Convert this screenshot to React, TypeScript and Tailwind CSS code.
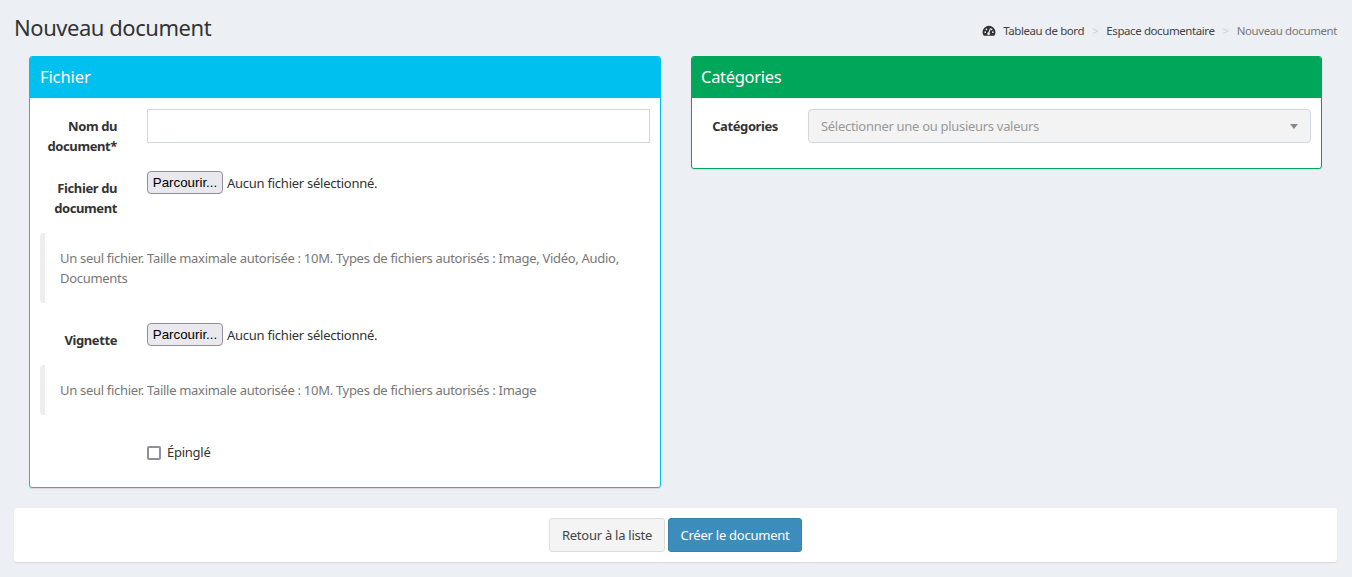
import React from "react";

const font = { fontFamily: '"Noto Sans", "Open Sans", sans-serif' };

function FileField() {
  return (
    <div className="flex h-[23px] items-center">
      <button
        type="button"
        className="h-[23px] w-[76px] rounded-[4px] border border-[#8f8f9d] bg-[#e9e9ed] text-center text-[13.33px] leading-none text-black [font-family:'Liberation_Sans',sans-serif]"
      >
        Parcourir...
      </button>
      <span className="ml-[4px] pt-[3px] text-[13px] tracking-[-0.25px] text-[#333]">Aucun fichier sélectionné.</span>
    </div>
  );
}

function Label({ children, className = "" }: { children: React.ReactNode; className?: string }) {
  return (
    <label className={`w-[77px] shrink-0 text-right text-[13px] font-bold leading-[20px] tracking-[-0.4px] text-[#333] ${className}`}>
      {children}
    </label>
  );
}

function Callout({ children, className = "" }: { children: React.ReactNode; className?: string }) {
  return (
    <div className={`rounded-[3px] border-l-[5px] border-[#eeeeee] py-[15px] pl-[15px] pr-[20px] text-[13px] leading-[20px] tracking-[-0.3px] text-[#777] ${className}`}>
      {children}
    </div>
  );
}

export default function App() {
  return (
    <div style={font} className="min-h-[577px] bg-[#ecf0f5] pl-[14px] pr-[15px] pt-[13px] text-[#333]">
      <header className="flex h-[28px] items-center justify-between">
        <h1 className="text-[22px] leading-[28px] tracking-[-0.45px] text-[#333]">Nouveau document</h1>
        <nav className="flex items-center pt-[8px] text-[11.5px] tracking-[-0.41px]">
          <svg viewBox="0 0 16 14" className="mr-[7px] h-[12px] w-[14px] fill-[#333]">
            <path d="M8 1a7.5 7.5 0 0 0-6.6 11.1c.2.3.5.5.9.5h11.4c.4 0 .7-.2.9-.5A7.5 7.5 0 0 0 8 1Z" />
            <circle cx="3.6" cy="8.4" r="1" fill="#ecf0f5" />
            <circle cx="5" cy="5" r="1" fill="#ecf0f5" />
            <circle cx="11" cy="5" r="1" fill="#ecf0f5" />
            <circle cx="12.4" cy="8.4" r="1" fill="#ecf0f5" />
            <path d="M9.2 3.6 7.4 8.5a1.6 1.6 0 1 0 1.3.5l1.5-5Z" fill="#ecf0f5" />
          </svg>
          <span className="text-[#444]">Tableau de bord</span>
          <span className="mx-[8px] text-[#ccc]">&gt;</span>
          <span className="text-[#444]">Espace documentaire</span>
          <span className="mx-[8px] text-[#ccc]">&gt;</span>
          <span className="text-[#777]">Nouveau document</span>
        </nav>
      </header>

      <div className="mt-[15px] flex items-start gap-[30px] px-[15px]">
        <section className="h-[432px] w-[632px] overflow-hidden rounded-[3px] border border-[#00c0ef] bg-white shadow-[0_1px_1px_rgba(0,0,0,0.1)]">
          <div className="-mx-px -mt-px flex h-[42px] items-center bg-[#00c0ef] px-[11px] text-[16.5px] tracking-[-0.1px] text-white">
            Fichier
          </div>
          <div className="px-[10px] pt-[11px]">
            <div className="flex gap-[30px]">
              <Label className="pt-[7px]">Nom du document*</Label>
              <input type="text" className="h-[34px] w-[503px] border border-[#d2d6de] bg-white outline-none" />
            </div>
            <div className="mt-[15px] flex gap-[30px]">
              <Label className="pt-[7px]">Fichier du document</Label>
              <FileField />
            </div>
            <Callout className="mt-[15px] h-[70px]">
              Un seul fichier. Taille maximale autorisée : 10M. Types de fichiers autorisés : Image, Vidéo, Audio, Documents
            </Callout>
            <div className="mt-[20px] flex gap-[30px]">
              <Label className="pt-[7px]">Vignette</Label>
              <FileField />
            </div>
            <Callout className="mt-[15px] h-[50px]">
              Un seul fichier. Taille maximale autorisée : 10M. Types de fichiers autorisés : Image
            </Callout>
            <div className="ml-[107px] mt-[28px] flex items-center gap-[6px]">
              <span className="h-[14px] w-[14px] rounded-[2px] border-2 border-[#8f8f9d] bg-white" />
              <span className="text-[13px] tracking-[-0.25px] text-[#333]">Épinglé</span>
            </div>
          </div>
        </section>

        <section className="h-[113px] w-[631px] overflow-hidden rounded-[3px] border border-[#00a65a] bg-white shadow-[0_1px_1px_rgba(0,0,0,0.1)]">
          <div className="-mx-px -mt-px flex h-[42px] items-center bg-[#00a65a] px-[10px] text-[16.5px] tracking-[-0.3px] text-white">
            Catégories
          </div>
          <div className="flex items-center gap-[30px] px-[10px] pt-[11px]">
            <Label className="-ml-px">Catégories</Label>
            <div className="relative flex h-[34px] w-[503px] items-center rounded-[4px] border border-[#d2d6de] bg-[#f3f3f3] pl-[12px] pt-px text-[13px] tracking-[-0.3px] text-[#999]">
              Sélectionner une ou plusieurs valeurs
              <span className="absolute right-[12px] top-[14px] h-0 w-0 border-x-[4px] border-t-[5px] border-x-transparent border-t-[#888]" />
            </div>
          </div>
        </section>
      </div>

      <footer className="mt-[20px] flex h-[54px] items-center justify-center gap-[3px] rounded-[3px] bg-white shadow-[0_1px_1px_rgba(0,0,0,0.1)]">
        <button type="button" className="h-[34px] w-[116px] rounded-[3px] border border-[#ddd] bg-[#f4f4f4] pt-px text-[13px] tracking-[-0.25px] text-[#444]">
          Retour à la liste
        </button>
        <button type="button" className="h-[34px] w-[134px] rounded-[3px] border border-[#367fa9] bg-[#3c8dbc] pt-px text-[13px] tracking-[-0.25px] text-white">
          Créer le document
        </button>
      </footer>
    </div>
  );
}
